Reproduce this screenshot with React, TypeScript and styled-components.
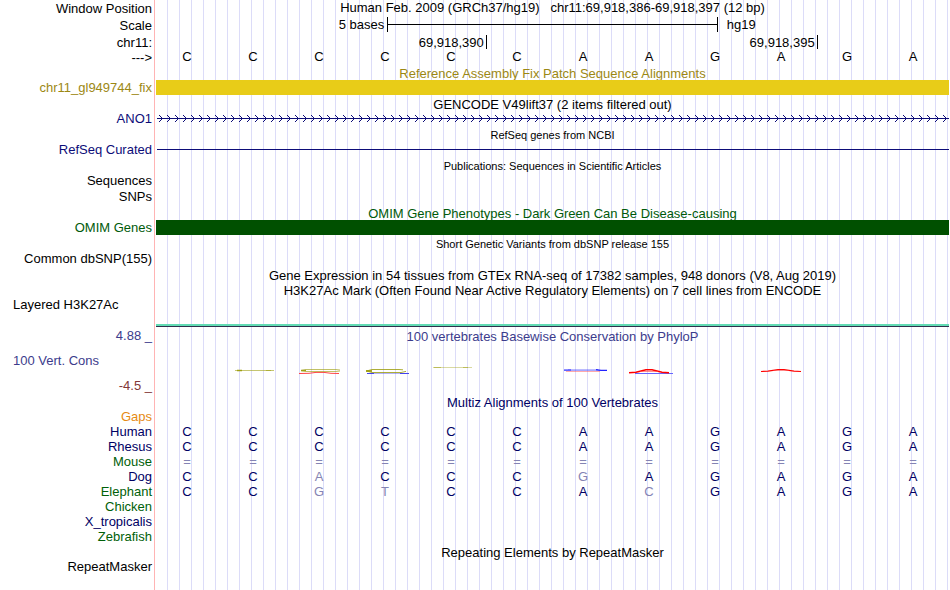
import React from "react";
import styled, { createGlobalStyle } from "styled-components";

const GlobalStyle = createGlobalStyle`
  body {
    margin: 0;
    background: #fff;
    font: 13px/15px "Liberation Sans", Arial, Helvetica, sans-serif;
    color: #000;
  }
`;

const color = {
  black: "#000",
  navy: "#000064",
  gene: "#0c0c78",
  phylo: "#3c3c8c",
  phyloLow: "#823838",
  gold: "#9c8814",
  goldBar: "#e8cc18",
  omimText: "#005a0a",
  omim: "#005000",
  gap: "#e68a12",
  green: "#006008",
  faded: "#8484b4",
};

const Board = styled.main`
  box-sizing: border-box;
  min-height: 100vh;
  padding-right: 1px;
  background:
    linear-gradient(to right, #fff 154px, #ffb4b4 154px 155px, #fff 155px 156px, transparent 156px),
    linear-gradient(to right, #dcdcf8 1px, transparent 1px) 167px 0 / 12px 100% #fff;
`;

const Row = styled.div<{ $height: number; $top?: number }>`
  display: grid;
  grid-template-columns: 152px minmax(0, 1fr);
  column-gap: 4px;
  box-sizing: border-box;
  height: ${(p) => p.$height}px;
  padding-top: ${(p) => p.$top ?? 0}px;
  white-space: pre;
`;

const Label = styled.div<{ $color?: string; $left?: boolean; $drop?: boolean }>`
  text-align: ${(p) => (p.$left ? "left" : "right")};
  padding-left: ${(p) => (p.$left ? 13 : 0)}px;
  padding-top: ${(p) => (p.$drop ? 1 : 0)}px;
  color: ${(p) => p.$color ?? color.black};
`;

const Title = styled.div<{ $color?: string; $small?: boolean }>`
  grid-column: 2;
  text-align: center;
  font-size: ${(p) => (p.$small ? 11 : 13)}px;
  color: ${(p) => p.$color ?? color.black};
`;

const Bar = styled.div<{ $color: string }>`
  z-index: 1;
  height: 15px;
  background: ${(p) => p.$color};
`;

const ScaleTrack = styled.div`
  display: grid;
  grid-template-columns: 7fr 10fr 7fr;
`;

const ScaleText = styled.span<{ $end?: boolean }>`
  text-align: ${(p) => (p.$end ? "right" : "left")};
  padding: 0 ${(p) => (p.$end ? 3 : 9)}px;
`;

const Bracket = styled.div`
  display: flex;
  align-items: center;
  height: 15px;
  border: solid #000;
  border-width: 0 1px;
  &::before {
    content: "";
    flex: 1;
    height: 1px;
    background: #000;
  }
`;

const Ruler = styled.div`
  display: grid;
  grid-template-columns: 5fr 5fr 2fr;
  margin-right: -1px;
`;

const Mark = styled.span`
  height: 14px;
  text-align: right;
  padding-right: 2px;
  border-right: 1px solid #000;
`;

const Bases = styled.div`
  display: grid;
  grid-template-columns: repeat(12, minmax(0, 1fr));
  margin: 0 3px 0 -2px;
  text-align: center;
`;

const Base = styled.span<{ $color: string }>`
  color: ${(p) => p.$color};
`;

const GeneSvg = styled.svg`
  display: block;
  width: 100%;
  height: 15px;
`;

const ThinLine = styled.div`
  height: 1px;
  margin: 7px 0 0 1px;
  background: ${color.gene};
`;

const SignalLine = styled.div`
  align-self: end;
  height: 1px;
  border-top: 2px solid #62dcb4;
  background: #30304c;
`;

const Stack = styled.div`
  display: flex;
  flex-direction: column;
  gap: 10px;
`;

const Conservation = styled.div`
  display: flex;
  flex-direction: column;
  gap: 22px;
  padding-top: 1px;
`;

const LogoSvg = styled.svg`
  display: block;
  width: 100%;
  height: 8px;
  overflow: visible;
`;

const OLIVE = "#a0a014";

const logos: Record<number, React.ReactNode> = {
  1: (
    <g stroke={OLIVE} fill="none">
      <path d="M15 4.5H54" opacity=".6" />
      <path d="M17 4.5H22" strokeWidth="1.5" />
      <path d="M46 4.5H51" opacity=".6" />
    </g>
  ),
  2: (
    <g fill="none">
      <path d="M54 4L50 3.5H20L15 4.6L20 5.5H50L54 5" stroke={OLIVE} opacity=".65" />
      <path d="M15 4.5H20" stroke={OLIVE} strokeWidth="1.5" />
      <path d="M13 7.5L23 7.3L30 6.4H38L45 7.3L53 7.5" stroke="#f44" />
    </g>
  ),
  3: (
    <g fill="none">
      <path d="M15 7.5H22M48 7.5H57" stroke="#44e" />
      <path d="M22 7.5H48" stroke="#44e" opacity=".4" />
      <path d="M51 3.8L47 3.5H20L14.5 5L20 6.5H49L54 5.4" stroke={OLIVE} opacity=".85" />
      <path d="M14 5H20" stroke={OLIVE} strokeWidth="1.8" />
    </g>
  ),
  4: (
    <g stroke={OLIVE} fill="none">
      <path d="M15 1.5H54" opacity=".4" />
      <path d="M16 1.5H23M45 1.5H50" opacity=".5" />
    </g>
  ),
  6: (
    <g fill="none">
      <path d="M18 3.5H48" stroke="#22f" opacity=".3" />
      <path d="M14 4.5H57" stroke="#22f" opacity=".4" />
      <path d="M14 4H21M46 3.7L51 4.4H57" stroke="#22f" strokeWidth="1.2" />
      <path d="M16 5.5H50" stroke="#f44" opacity=".45" />
    </g>
  ),
  7: (
    <g fill="none">
      <path d="M19 7.5H57" stroke="#66f" />
      <path d="M13 6.7L20 6.2L30 3.8H36L46 6.2L53 6.7" stroke="#f00" strokeWidth="1.6" />
      <path d="M24 5.5H42" stroke="#f44" opacity=".6" />
    </g>
  ),
  9: (
    <g fill="none">
      <path d="M13 5.5L20 5.2L30 3.6H36L46 5.2L53 5.5" stroke="#f00" strokeWidth="1.2" />
      <path d="M25 4.5H41" stroke="#f44" opacity=".4" />
    </g>
  ),
};

const REFERENCE = "CCCCCCAAGAGA";

const species = [
  { name: "Gaps", tint: color.gap, seq: "" },
  { name: "Human", tint: color.navy, seq: REFERENCE },
  { name: "Rhesus", tint: color.navy, seq: REFERENCE },
  { name: "Mouse", tint: color.green, seq: "============" },
  { name: "Dog", tint: color.navy, seq: "CCACCCGAGAGA" },
  { name: "Elephant", tint: color.green, seq: "CCGTCCACGAGA" },
  { name: "Chicken", tint: color.green, seq: "" },
  { name: "X_tropicalis", tint: color.navy, seq: "" },
  { name: "Zebrafish", tint: color.green, seq: "" },
];

function Sequence({ seq, tint }: { seq: string; tint: string }) {
  return (
    <Bases>
      {[...seq].map((base, i) => (
        <Base key={i} $color={base === REFERENCE[i] ? tint : color.faded}>
          {base}
        </Base>
      ))}
    </Bases>
  );
}

function GeneArrows() {
  return (
    <GeneSvg aria-hidden="true">
      <defs>
        <pattern id="strand" width="8" height="15" patternUnits="userSpaceOnUse">
          <path d="M3 4L6.5 7.5L3 11" fill="none" stroke={color.gene} />
        </pattern>
      </defs>
      <rect width="100%" height="15" fill="url(#strand)" />
      <rect x="1" y="7" width="100%" height="1" fill={color.gene} />
    </GeneSvg>
  );
}

export default function App() {
  return (
    <>
      <GlobalStyle />
      <Board>
        <Row $height={17}>
          <Label $drop>Window Position</Label>
          <Title>{"Human Feb. 2009 (GRCh37/hg19)   chr11:69,918,386-69,918,397 (12 bp)"}</Title>
        </Row>
        <Row $height={17}>
          <Label $drop>Scale</Label>
          <ScaleTrack>
            <ScaleText $end>5 bases</ScaleText>
            <Bracket />
            <ScaleText>hg19</ScaleText>
          </ScaleTrack>
        </Row>
        <Row $height={15} $top={1}>
          <Label>chr11:</Label>
          <Ruler>
            <Mark>69,918,390</Mark>
            <Mark>69,918,395</Mark>
          </Ruler>
        </Row>
        <Row $height={16}>
          <Label $drop>{"--->"}</Label>
          <Sequence seq={REFERENCE} tint={color.black} />
        </Row>

        <Row $height={15} $top={1}>
          <Title $color={color.gold}>Reference Assembly Fix Patch Sequence Alignments</Title>
        </Row>
        <Row $height={15}>
          <Label $color={color.gold}>chr11_gl949744_fix</Label>
          <Bar $color={color.goldBar} />
        </Row>

        <Row $height={16} $top={2}>
          <Title>GENCODE V49lift37 (2 items filtered out)</Title>
        </Row>
        <Row $height={15}>
          <Label $color={color.gene}>ANO1</Label>
          <GeneArrows />
        </Row>

        <Row $height={16} $top={2}>
          <Title $small>RefSeq genes from NCBI</Title>
        </Row>
        <Row $height={15}>
          <Label $color={color.gene}>RefSeq Curated</Label>
          <ThinLine />
        </Row>

        <Row $height={16} $top={2}>
          <Title $small>Publications: Sequences in Scientific Articles</Title>
        </Row>
        <Row $height={16}>
          <Label>Sequences</Label>
        </Row>
        <Row $height={16}>
          <Label>SNPs</Label>
        </Row>

        <Row $height={15} $top={1}>
          <Title $color={color.omimText}>OMIM Gene Phenotypes - Dark Green Can Be Disease-causing</Title>
        </Row>
        <Row $height={15}>
          <Label $color={color.omimText}>OMIM Genes</Label>
          <Bar $color={color.omim} />
        </Row>

        <Row $height={16} $top={2}>
          <Title $small>Short Genetic Variants from dbSNP release 155</Title>
        </Row>
        <Row $height={15}>
          <Label>Common dbSNP(155)</Label>
        </Row>

        <Row $height={16} $top={2}>
          <Title>Gene Expression in 54 tissues from GTEx RNA-seq of 17382 samples, 948 donors (V8, Aug 2019)</Title>
        </Row>
        <Row $height={15} $top={1}>
          <Title>H3K27Ac Mark (Often Found Near Active Regulatory Elements) on 7 cell lines from ENCODE</Title>
        </Row>
        <Row $height={30}>
          <Label $left>Layered H3K27Ac</Label>
          <SignalLine />
        </Row>

        <Row $height={68} $top={1}>
          <Stack>
            <Label $color={color.phylo}>4.88 _</Label>
            <Label $left $color={color.phylo}>100 Vert. Cons</Label>
            <Label $color={color.phyloLow}>-4.5 _</Label>
          </Stack>
          <Conservation>
            <Title $color={color.phylo}>100 vertebrates Basewise Conservation by PhyloP</Title>
            <Bases>
              {[...REFERENCE].map((_, i) => (
                <LogoSvg key={i} viewBox="0 0 66 8" preserveAspectRatio="none" aria-hidden="true">
                  {logos[i]}
                </LogoSvg>
              ))}
            </Bases>
          </Conservation>
        </Row>

        <Row $height={14}>
          <Title $color={color.navy}>Multiz Alignments of 100 Vertebrates</Title>
        </Row>
        {species.map((s) => (
          <Row key={s.name} $height={15}>
            <Label $color={s.tint}>{s.name}</Label>
            <Sequence seq={s.seq} tint={color.navy} />
          </Row>
        ))}

        <Row $height={15} $top={1}>
          <Title>Repeating Elements by RepeatMasker</Title>
        </Row>
        <Row $height={15}>
          <Label>RepeatMasker</Label>
        </Row>
      </Board>
    </>
  );
}
